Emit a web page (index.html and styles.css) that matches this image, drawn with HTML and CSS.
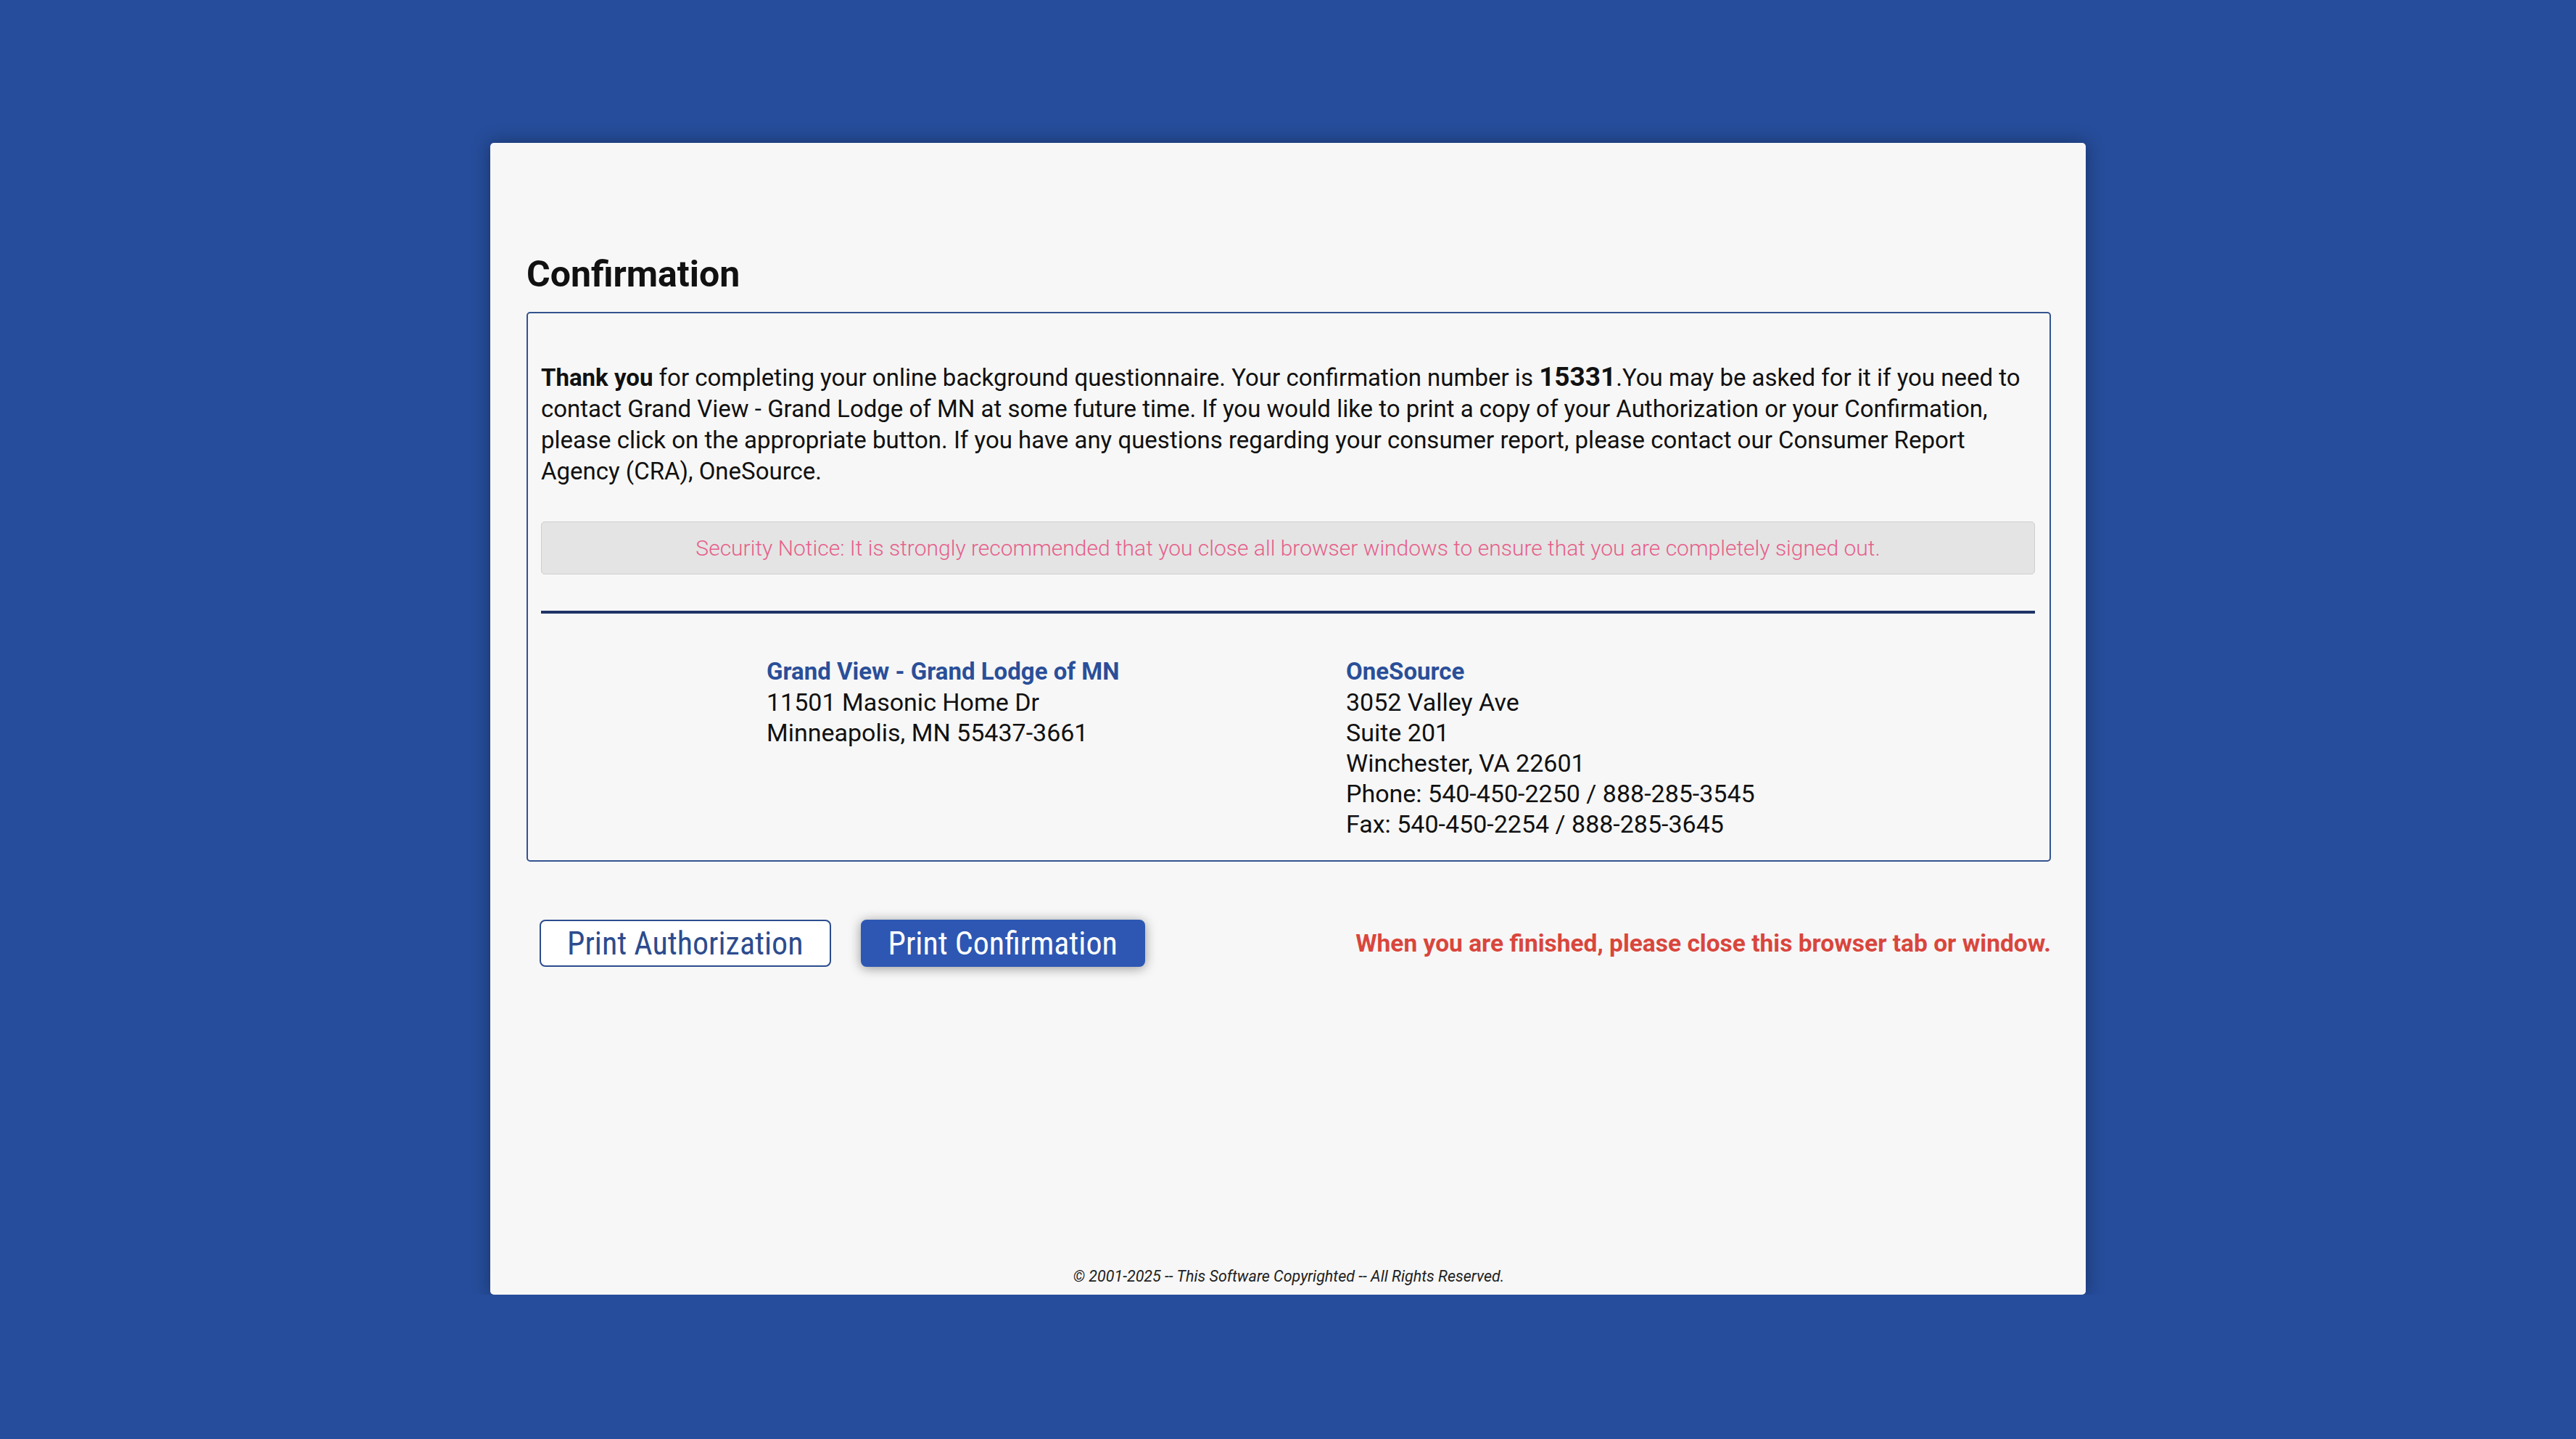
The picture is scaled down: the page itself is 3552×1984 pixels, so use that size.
FILE: index.html
```html
<!DOCTYPE html>
<html lang="en">
<head>
  <meta charset="UTF-8" />
  <meta name="viewport" content="width=device-width, initial-scale=1.0"/>
  <title>Confirmation</title>
  <link rel="stylesheet" href="styles.css">
</head>
<body>
  <div class="page">
    <h1>Confirmation</h1>

    <div class="confirm-box">
      <p class="thanks">
        <b>Thank you</b> for completing your online background questionnaire. Your confirmation number is <b class="conf-num">15331</b>.You may be asked for it if you need to contact Grand View - Grand Lodge of MN at some future time. If you would like to print a copy of your Authorization or your Confirmation, please click on the appropriate button. If you have any questions regarding your consumer report, please contact our Consumer Report Agency (CRA), OneSource.
      </p>

      <div class="security-notice">
        Security Notice: It is strongly recommended that you close all browser windows to ensure that you are completely signed out.
      </div>

      <hr class="divider">

      <div class="addresses">
        <div class="address">
          <div class="address-name">Grand View - Grand Lodge of MN</div>
          <div>11501 Masonic Home Dr</div>
          <div>Minneapolis, MN 55437-3661</div>
        </div>
        <div class="address">
          <div class="address-name">OneSource</div>
          <div>3052 Valley Ave</div>
          <div>Suite 201</div>
          <div>Winchester, VA 22601</div>
          <div>Phone: 540-450-2250 / 888-285-3545</div>
          <div>Fax: 540-450-2254 / 888-285-3645</div>
        </div>
      </div>
    </div>

    <div class="actions">
      <button class="btn btn-outline" onclick="window.print()">Print Authorization</button>
      <button class="btn btn-primary" onclick="window.print()">Print Confirmation</button>
      <span class="close-note">When you are finished, please close this browser tab or window.</span>
    </div>

    <p class="copyright">&copy; 2001-2025 -- This Software Copyrighted -- All Rights Reserved.</p>
  </div>
</body>
</html>
```
FILE: styles.css
```css
body {
  margin: 0;
  background: #264d9b;
  font-family: Roboto, "Open Sans", sans-serif;
  color: #111;
}

.page {
  box-sizing: border-box;
  width: 2200px;
  min-height: 1588px;
  margin: 197px auto 0;
  padding: 154px 48px 12px 50px;
  background: #f7f7f7;
  border-radius: 5px;
  box-shadow: 0 0 24px rgba(0, 0, 0, 0.35);
  display: flex;
  flex-direction: column;
}

h1 {
  margin: 0 0 25px;
  font-size: 50px;
  line-height: 54px;
  font-weight: 700;
}

.confirm-box {
  border: 2px solid #34538f;
  border-radius: 5px;
  padding: 67px 20px 29px 18px;
}

.thanks {
  margin: 0;
  font-size: 33px;
  line-height: 43px;
}

.conf-num {
  font-size: 37px;
  line-height: 1;
}

.security-notice {
  margin-top: 48px;
  padding: 16px 10px;
  line-height: 39px;
  font-size: 30px;
  font-weight: 300;
  text-align: center;
  color: #e6608a;
  background: #e4e4e4;
  border: 1px solid #cfcfcf;
  border-radius: 5px;
}

.divider {
  margin: 50px 0 0;
  height: 4px;
  border: none;
  background: #1e3566;
}

.addresses {
  display: grid;
  grid-template-columns: 799px auto;
  margin-top: 59px;
  padding-left: 311px;
  font-size: 34px;
  line-height: 42px;
}

.address-name {
  font-size: 33px;
  font-weight: 700;
  color: #2a4f99;
}

.actions {
  display: flex;
  align-items: center;
  gap: 41px;
  margin-top: 80px;
  padding-left: 18px;
}

.btn {
  height: 65px;
  padding: 0 36px;
  font-family: Roboto, "Liberation Sans", sans-serif;
  font-size: 44px;
  font-stretch: 75%;
  border: 2px solid #2c4c8e;
  border-radius: 8px;
  cursor: pointer;
}

.btn-outline {
  background: #fff;
  color: #2c4c8e;
}

.btn-primary {
  background: #2d57b3;
  border-color: #2d57b3;
  color: #fff;
  box-shadow: 0 2px 16px rgba(0, 0, 0, 0.4);
}

.close-note {
  margin-left: auto;
  font-size: 33.5px;
  font-weight: 700;
  color: #d9463c;
}

.copyright {
  margin: auto 0 0;
  font-size: 21.5px;
  line-height: 26px;
  font-style: italic;
  text-align: center;
  color: #222;
}
```
